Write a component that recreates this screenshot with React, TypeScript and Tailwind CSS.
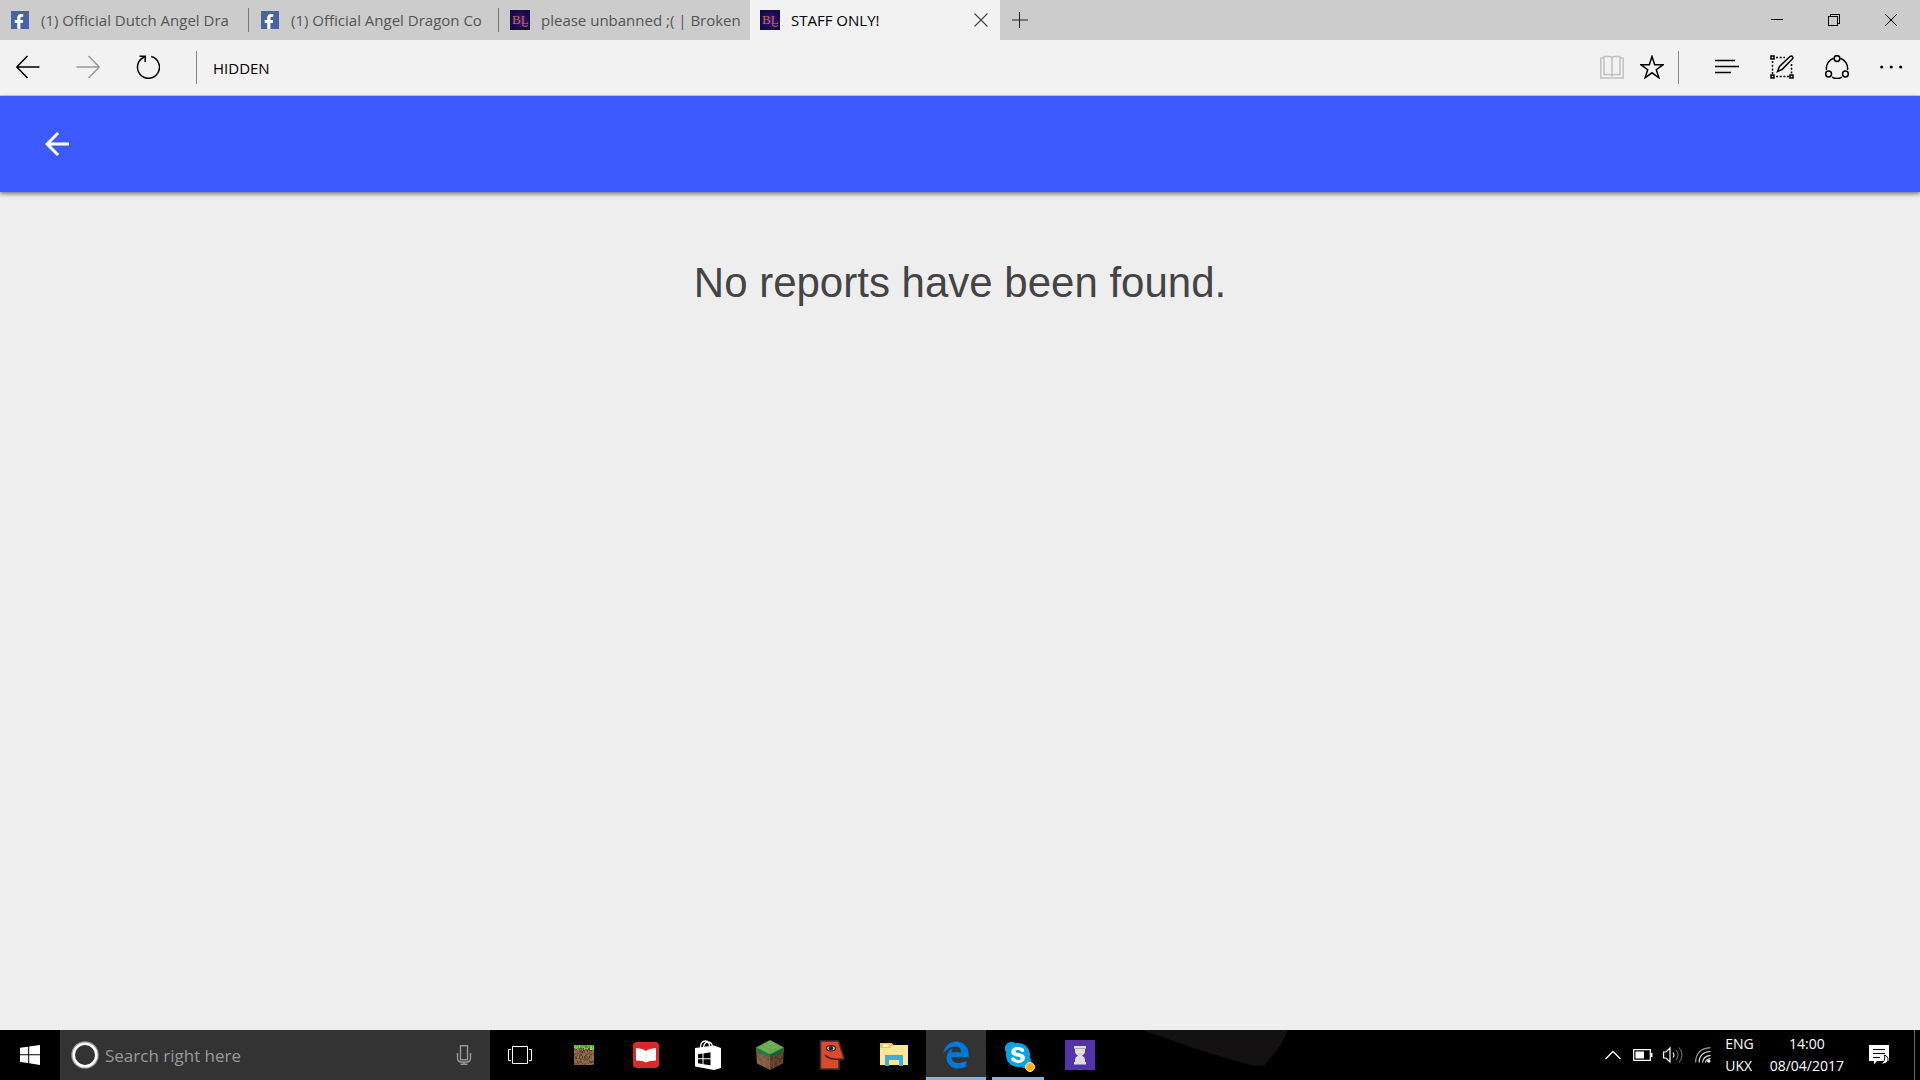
import type { ReactNode } from 'react';
import clsx from 'clsx';
import { FaFacebookF, FaSkype } from 'react-icons/fa';
import { FaEdgeLegacy } from 'react-icons/fa6';

type Tab = {
  title: string;
  icon: 'facebook' | 'broken';
  active?: boolean;
};

const tabs: Tab[] = [
  { title: '(1) Official Dutch Angel Dra', icon: 'facebook' },
  { title: '(1) Official Angel Dragon Co', icon: 'facebook' },
  { title: 'please unbanned ;( | Broken', icon: 'broken' },
  { title: 'STAFF ONLY!', icon: 'broken', active: true },
];

const dirt = ['#8a5f41', '#6f4a31', '#9b6d4b', '#5b3b27', '#7b5539', '#80705f'];
const grass = ['#6cc13a', '#58a82c', '#83d64c', '#4c9426'];

// Small integer hash, gives the block textures a stable noise
const noise = (x: number, y: number) => {
  const n = Math.imul(x * 374761393 + y * 668265263, 1274126177);
  return ((n ^ (n >>> 13)) >>> 0) % 997;
};

/* Favicons */
function FacebookIcon() {
  return (
    <span className="relative mx-px block size-[18px] shrink-0 overflow-hidden bg-[#4862a3]">
      <FaFacebookF className="absolute right-0.5 -bottom-px size-4 text-white" />
    </span>
  );
}

function BrokenIcon() {
  return (
    <svg viewBox="0 0 20 20" className="size-5 shrink-0">
      <defs>
        <radialGradient id="brokenBg">
          <stop offset="0" stopColor="#4a1088" />
          <stop offset="1" stopColor="#140a48" />
        </radialGradient>
      </defs>
      <rect width="20" height="20" fill="url(#brokenBg)" />
      <text x="2" y="14" fontSize="13" fontFamily="Liberation Serif, serif" fill="#b87048">
        BL
      </text>
      <path d="M12 14.500q2.500 3 6 1" stroke="#a85c3c" strokeWidth="1.300" fill="none" />
    </svg>
  );
}

/* Toolbar icons share one 24px box */
function Glyph({ children, className }: { children: ReactNode; className?: string }) {
  return (
    <svg viewBox="0 0 24 24" fill="none" stroke="currentColor" strokeWidth="1.500" className={clsx('size-6', className)}>
      {children}
    </svg>
  );
}

function IconButton({ label, children }: { label: string; children: ReactNode }) {
  return (
    <button type="button" aria-label={label} className="shrink-0">
      {children}
    </button>
  );
}

function TabStrip() {
  return (
    <div className="flex h-10 bg-[#cccccc]">
      {tabs.map((tab, index) => (
        <div
          key={tab.title}
          className={clsx(
            'flex w-[250px] items-center',
            tab.active ? 'bg-[#f2f2f2] text-black' : 'text-[#555555]'
          )}
        >
          <button type="button" className="flex min-w-0 flex-1 items-center gap-[11px] pl-2.5 text-left">
            {tab.icon === 'facebook' ? <FacebookIcon /> : <BrokenIcon />}
            <span className="text-[15px] leading-6 whitespace-nowrap">{tab.title}</span>
          </button>
          {tab.active && (
            <button type="button" aria-label="Close tab" className="mr-3 ml-2">
              <svg viewBox="0 0 14 14" stroke="#444" strokeWidth="1.100" className="size-3.5">
                <path d="M.5.5l13 13M13.500.5l-13 13" />
              </svg>
            </button>
          )}
          {index < 2 && <span className="mr-px h-6 w-px bg-[#777777]" />}
        </div>
      ))}
      <button type="button" aria-label="New tab" className="flex w-10 items-center justify-center">
        <svg viewBox="0 0 16 16" className="size-4">
          <path d="M0 8h16" stroke="#777" strokeWidth="2" />
          <path d="M7.500 0v16" stroke="#222" strokeWidth="1" />
        </svg>
      </button>
      <div className="mr-px ml-auto flex">
        <button type="button" aria-label="Minimize" className="flex w-[57px] items-center justify-center">
          <svg viewBox="0 0 12 12" stroke="#000" shapeRendering="crispEdges" className="size-3">
            <path d="M0 5.500h12" />
          </svg>
        </button>
        <button type="button" aria-label="Restore" className="flex w-[57px] items-center justify-center">
          <svg viewBox="0 0 12 12" stroke="#000" fill="none" shapeRendering="crispEdges" className="size-3">
            <path d="M.5 2.500h9v9h-9zM2.500 2.500v-2h9v9h-2" />
          </svg>
        </button>
        <button type="button" aria-label="Close" className="flex w-[57px] items-center justify-center">
          <svg viewBox="0 0 12 12" stroke="#000" className="size-3">
            <path d="M0 0l12 12M12 0L0 12" />
          </svg>
        </button>
      </div>
    </div>
  );
}

function AddressBar() {
  return (
    <div className="flex h-14 items-center border-b border-[#cccccc] bg-[#f2f2f2] px-4 pb-px text-black">
      <div className="flex items-center gap-9">
        <IconButton label="Back">
          <Glyph>
            <path d="M1 12h22.500M11.500 1L.8 12l10.700 11" />
          </Glyph>
        </IconButton>
        <IconButton label="Forward">
          <Glyph className="text-[#999999]">
            <path d="M.5 12H23M12.500 1l10.700 11-10.700 11" />
          </Glyph>
        </IconButton>
        <IconButton label="Refresh">
          <Glyph>
            <path d="M15.200 1.600A11 11 0 1 1 8.500 2" />
            <path d="M3.500 1.200h5.700v5.800" />
          </Glyph>
        </IconButton>
        <span className="h-[33px] w-px bg-[#888888]" />
      </div>
      <input
        type="text"
        aria-label="Address"
        defaultValue="HIDDEN"
        className="h-8 min-w-0 flex-1 bg-transparent px-4 pt-0.5 text-[15px] leading-6 outline-none"
      />
      <div className="flex items-center gap-4">
        <IconButton label="Reading view">
          <Glyph className="text-[#c0c0c0]">
            <path d="M4 3H.8v20h22.400V3H20" />
            <path d="M4 1.500h5.500Q12 1.500 12 3.500 12 1.500 14.500 1.500H20v18h-5.500Q12 19.500 12 21.500 12 19.500 9.500 19.500H4zM12 3v18" />
          </Glyph>
        </IconButton>
        <IconButton label="Add to favorites">
          <Glyph>
            <path d="M12 1.500l2.700 8.200h8.400l-6.800 5 2.600 8.100-6.900-5-6.900 5 2.600-8.100-6.800-5h8.400z" />
          </Glyph>
        </IconButton>
      </div>
      <span className="mr-9 ml-3.5 h-[33px] w-px bg-[#888888]" />
      <div className="flex items-center gap-[31px]">
        <IconButton label="Hub">
          <Glyph>
            <path d="M0 5.500h20M0 11.500h24M0 17.500h16" />
          </Glyph>
        </IconButton>
        <IconButton label="Make a web note">
          <Glyph>
            <path d="M6 2.500h9M2.500 6v13M6 21.500h13M21.500 9v10" strokeDasharray="2 1.700" />
            <path d="M1 1h3v3H1zM1 20h3v3H1zM20 20h3v3h-3z" />
            <path d="M7.500 16.500l2-5L20.200 1.300q1.500-.8 2.500.7.500 1-.2 1.800L12 14.500z" />
          </Glyph>
        </IconButton>
        <IconButton label="Share">
          <Glyph>
            <path d="M8.500 3.300A10.700 10.700 0 0 0 1.500 15M15.500 3.300A10.700 10.700 0 0 1 22.500 15M7 22.200a10.700 10.700 0 0 0 10 0" />
            <circle cx="12" cy="3.600" r="2.900" />
            <circle cx="3.600" cy="19" r="2.900" />
            <circle cx="20.400" cy="19" r="2.900" />
          </Glyph>
        </IconButton>
        <IconButton label="More">
          <Glyph>
            <g fill="currentColor" stroke="none">
              <circle cx="1.700" cy="12" r="1.600" />
              <circle cx="11.200" cy="12" r="1.600" />
              <circle cx="20.700" cy="12" r="1.600" />
            </g>
          </Glyph>
        </IconButton>
      </div>
    </div>
  );
}

/* Taskbar app icons */
function GrassIcon() {
  const cells = Array.from({ length: 256 }, (_, i) => ({ x: i % 16, y: Math.floor(i / 16) }));
  return (
    <svg viewBox="0 0 16 16" shapeRendering="crispEdges" className="size-5">
      {cells.map(({ x, y }) => {
        const n = noise(x, y);
        const green = y < 2 + (noise(x, 50) % 3);
        return <rect key={`${x}-${y}`} x={x} y={y} width="1" height="1" fill={green ? grass[n % 4] : dirt[n % 6]} />;
      })}
    </svg>
  );
}

function BookIcon() {
  return (
    <svg viewBox="0 0 26 26" className="size-[26px]">
      <rect width="26" height="26" rx="4" fill="#d92a25" />
      <path d="M3 6q7 .5 10 3 3-2.500 10-3v12.500q-7 0-10 2-3-2-10-2z" fill="#fff" />
      <path d="M13 9v11" stroke="#ddd" strokeWidth=".8" />
    </svg>
  );
}

function StoreIcon() {
  return (
    <svg viewBox="0 0 30 30" className="size-[30px]">
      <path d="M7.500 8q0-7 5-7 3.500 0 4 5M10.500 7q1-5 4.500-5 3.500 0 4.500 4.500" fill="none" stroke="#fff" strokeWidth="1.300" />
      <path d="M2 8l19-2.500V30L2 26.500z" fill="#fff" />
      <path d="M21 5.500l7 2.500v20l-7 2z" fill="#fff" />
      <path d="M5 14.300l4.500-.7v4.700H5zM10.500 13.400l7-1.100v6h-7zM5 19.300h4.500V24L5 23.300zM10.500 19.300h7v6l-7-1.100z" fill="#000" />
    </svg>
  );
}

function BlockIcon() {
  const specks = Array.from({ length: 36 }, (_, i) => ({ c: i % 6, r: Math.floor(i / 6) }));
  return (
    <svg viewBox="0 0 30 30" className="size-[30px]">
      <path d="M1 8l14 6.500V30L2 23.500z" fill="#866043" />
      <path d="M29 8l-14 6.500V30l13-6.500z" fill="#5c402c" />
      {specks.map(({ c, r }) => (
        <g key={`${c}-${r}`} opacity=".7">
          <path d={`M${2 + c * 2.1} ${11 + r * 2.1 + c * 1.05}l1.500.7v1.500l-1.500-.7z`} fill={dirt[noise(c, r) % 6]} />
          <path d={`M${28 - c * 2.1} ${11 + r * 2.1 + c * 1.05}l-1.500.7v1.500l1.500-.7z`} fill={noise(c, r) % 2 ? '#4c3423' : '#73513a'} />
        </g>
      ))}
      <path d="M1 7.500l14 6v4l-2-2-2 1-2-2.500-2 1-2-2.500-2 .500-2-2z" fill="#1f7a45" />
      <path d="M29 7.500l-14 6v4l2-2 2 1 2-2.500 2 1 2-2.500 2 .5 2-2z" fill="#176338" />
      <path d="M15 0l14 7.500-14 6.800L1 7.500z" fill="#6aa84f" />
      <path d="M9 4.500l6 3M13 2l8 4M6 7l8 4M17 8.500l5-2.500M13 5l6-2.500" stroke="#7dba62" strokeWidth=".8" />
    </svg>
  );
}

function FaceIcon() {
  return (
    <svg viewBox="0 0 30 30" className="size-[30px]">
      <path d="M3.500 1h18L27 18.500q-2.500 1.500-5 1.500v9H3.500z" fill="#dc4a2b" stroke="#3b3032" strokeWidth="1.600" />
      <ellipse cx="14" cy="8.300" rx="4.500" ry="2.700" fill="#dcc8c0" stroke="#2c2526" strokeWidth="1.200" />
      <circle cx="14" cy="8.300" r="2.200" fill="#2c2526" />
      <path d="M8 15q5 5.500 17 4" fill="none" stroke="#3b2526" strokeWidth="1.500" />
    </svg>
  );
}

function FolderIcon() {
  return (
    <svg viewBox="0 0 28 24" className="h-6 w-7">
      <path d="M0 0h12l2 3h14v19H0z" fill="#f5c84b" />
      <path d="M3 1.500h6v2H3z" fill="#fff" />
      <path d="M0 5h10l3-3h15v20H0z" fill="#ffe794" />
      <path d="M5 23V12h18v11h-4v-6H9v6z" fill="#38b0e3" />
    </svg>
  );
}

function SkypeIcon() {
  return (
    <span className="relative flex size-[30px] items-center justify-center">
      <span className="absolute size-5 rounded-full bg-white" />
      <FaSkype className="relative size-[30px] text-[#0aa4e4]" />
      <span className="absolute -right-0.5 -bottom-0.5 size-2.5 rounded-full border border-[#fff3d0] bg-[#ffad10]" />
    </span>
  );
}

function HourglassIcon() {
  return (
    <svg viewBox="0 0 30 30" className="size-[30px]">
      <rect width="30" height="30" fill="#5333ab" />
      <path d="M9 6h12v3h-1v3q0 2-3 3.500 3 1.500 3 4V22h1v2.500H9V22h1v-2.500q0-2.500 3-4-3-1.500-3-3.500V9H9z" fill="#dcdcdc" />
      <path d="M9 8.500h12" stroke="#aaa" strokeWidth="1" />
    </svg>
  );
}

const apps = [
  { name: 'Minecraft', icon: <GrassIcon /> },
  { name: 'Reader', icon: <BookIcon /> },
  { name: 'Store', icon: <StoreIcon /> },
  { name: 'Minecraft Launcher', icon: <BlockIcon /> },
  { name: 'Face', icon: <FaceIcon /> },
  { name: 'File Explorer', icon: <FolderIcon /> },
  { name: 'Microsoft Edge', icon: <FaEdgeLegacy className="size-7 text-[#0078d7]" />, state: 'active' },
  { name: 'Skype', icon: <SkypeIcon />, state: 'open' },
  { name: 'Hourglass', icon: <HourglassIcon /> },
];

function Taskbar() {
  return (
    <footer className="flex h-[50px] items-stretch bg-black text-white">
      <button type="button" aria-label="Start" className="flex w-[60px] items-center justify-center">
        <svg viewBox="0 0 20 20" fill="#fff" className="size-5">
          <path d="M0 2.800l8.200-1.100v7.600H0zM9.200 1.500L20 0v9.300H9.200zM0 10.300h8.200v7.800L0 17zM9.200 10.300H20V20L9.200 18.300z" />
        </svg>
      </button>
      <div className="flex w-[430px] items-center bg-[#333333] pr-[18px] pl-[11px]">
        <svg viewBox="0 0 28 28" className="size-7 shrink-0" fill="none">
          <circle cx="14" cy="14" r="13" stroke="#999" strokeWidth="1.500" />
          <circle cx="14" cy="14" r="11.300" stroke="#fff" strokeWidth="2.600" />
        </svg>
        <input
          type="text"
          aria-label="Search"
          placeholder="Search right here"
          className="ml-1.5 min-w-0 flex-1 bg-transparent pt-0.5 text-[17px] leading-6 outline-none placeholder:text-[#999999]"
        />
        <button type="button" aria-label="Speak">
          <svg viewBox="0 0 16 20" fill="none" stroke="#999" strokeWidth="1.400" className="h-5 w-4">
            <rect x="4.500" y=".7" width="7" height="14" />
            <path d="M1.500 8v5q0 4 4 4h5q4 0 4-4V8M8 17v2.300M4.500 19.300h7" />
          </svg>
        </button>
      </div>
      <button type="button" aria-label="Task view" className="flex w-[60px] items-center justify-center">
        <svg viewBox="0 0 24 18" fill="none" stroke="#fff" className="h-[18px] w-6">
          <path d="M4.500.5h15v17h-15zM3 3.500H.5v11H3M21 3.500h2.500v11H21" />
        </svg>
      </button>
      <nav className="ml-1 flex gap-0.5">
        {apps.map((app) => (
          <button
            key={app.name}
            type="button"
            aria-label={app.name}
            className={clsx(
              'relative flex w-[60px] items-center justify-center',
              app.state === 'active' && 'bg-[#333333]'
            )}
          >
            {app.icon}
            {app.state && (
              <span
                className={clsx(
                  'absolute bottom-0 h-[3px] bg-[#76b9ed]',
                  app.state === 'active' ? 'inset-x-0' : 'inset-x-1'
                )}
              />
            )}
          </button>
        ))}
      </nav>

      {/* Faint wallpaper shape showing through the bar */}
      <svg viewBox="0 0 150 50" className="ml-8 h-full w-[150px]">
        <path d="M0 0l60 21 50 14.500h12Q138 20 146 0z" fill="#141112" />
      </svg>

      <div className="ml-auto flex items-center">
        <button type="button" aria-label="Show hidden icons">
          <svg viewBox="0 0 16 10" fill="none" stroke="#fff" strokeWidth="1.300" className="h-2.5 w-4">
            <path d="M.5 9L8 1.500 15.500 9" />
          </svg>
        </button>
        <svg viewBox="0 0 20 12" className="ml-3 h-3 w-5">
          <path d="M.7.7h16.600v10.600H.7z" fill="none" stroke="#fff" strokeWidth="1.200" />
          <path d="M2.500 2.500h8.500v7H2.500zM18 4h1.500v4H18z" fill="#fff" />
        </svg>
        <svg viewBox="0 0 20 18" fill="none" strokeWidth="1.200" className="ml-2.5 h-[18px] w-5">
          <path d="M.6 6h2.400l4-4v14l-4-4H.6z" stroke="#fff" />
          <path d="M10 6.500q2 2.500 0 5" stroke="#ddd" />
          <path d="M13 4q4 5 0 10M16 1.500q6 7.500 0 15" stroke="#666" />
        </svg>
        <svg viewBox="0 0 16 16" fill="none" strokeWidth="1.200" className="ml-3 size-4">
          <path d="M.6 15.500Q1 1.500 15.500.7" stroke="#999" />
          <path d="M4 15.500Q4.500 5 15.500 4.500M7.500 15.500Q8 9 15.500 8.300M10.500 15.500q.5-3.500 5-4" stroke="#ddd" />
          <circle cx="13.800" cy="14" r="1.700" fill="#fff" />
        </svg>
        <div className="ml-3.5 text-[14px] leading-[22px]">
          <div>ENG</div>
          <div>UKX</div>
        </div>
        <div className="ml-4 text-center text-[14px] leading-[22px]">
          <div>14:00</div>
          <div>08/04/2017</div>
        </div>
        <button type="button" aria-label="Notifications" className="ml-[25px]">
          <svg viewBox="0 0 20 20" className="size-5">
            <path d="M0 0h20v16H8l-3 3.500V16H0z" fill="#fff" />
            <path d="M4 4.500h12M4 8.500h12M4 12.500h7" stroke="#000" strokeWidth="1.100" />
            <path d="M15.500 10q4 1.500 3.500 5.500-1.500 4-7.500 3.500 5.500-3 4-9z" fill="#fff" stroke="#000" />
          </svg>
        </button>
        <span className="mr-[5px] ml-[25px] h-[50px] w-px bg-[#666666]" />
      </div>
    </footer>
  );
}

export default function App() {
  return (
    <div className="flex min-h-screen flex-col bg-[#eeeeee] font-['Open_Sans','Noto_Sans',sans-serif]">
      <TabStrip />
      <AddressBar />

      <header className="flex h-24 items-center bg-[#3d5afe] px-[45px] shadow-[0_2px_4px_rgba(0,0,0,0.5)]">
        <a href="#back" aria-label="Back" className="text-white">
          <svg viewBox="4 4 16 16" fill="currentColor" className="size-6">
            <path d="M20 11H7.830l5.590-5.590L12 4l-8 8 8 8 1.410-1.410L7.830 13H20v-2z" />
          </svg>
        </a>
      </header>

      <main className="flex-1 px-4 pt-16">
        <h1 className="text-center font-['Liberation_Sans',Arial,sans-serif] text-[42px] leading-[54px] text-[#444444]">
          No reports have been found.
        </h1>
      </main>

      <Taskbar />
    </div>
  );
}
